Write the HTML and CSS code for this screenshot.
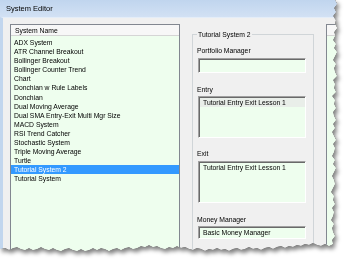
FILE: index.html
```html
<!DOCTYPE html>
<html lang="en">
  <head>
    <meta charset="UTF-8" />
    <meta name="viewport" content="width=device-width, initial-scale=1.0" />
    <title>System Editor</title>
    <link rel="stylesheet" href="styles.css">
  </head>
  <body>
    <div class="frame">
      <div class="window">
        <div class="titlebar">System Editor</div>
        <div class="client">
          <div class="listbox systems">
            <div class="list-header">System Name</div>
            <ul class="list-items">
              <li>ADX System</li>
              <li>ATR Channel Breakout</li>
              <li>Bollinger Breakout</li>
              <li>Bollinger Counter Trend</li>
              <li>Chart</li>
              <li>Donchian w Rule Labels</li>
              <li>Donchian</li>
              <li>Dual Moving Average</li>
              <li>Dual SMA Entry-Exit Multi Mgr Size</li>
              <li>MACD System</li>
              <li>RSI Trend Catcher</li>
              <li>Stochastic System</li>
              <li>Triple Moving Average</li>
              <li>Turtle</li>
              <li class="selected">Tutorial System 2</li>
              <li>Tutorial System</li>
            </ul>
          </div>

          <div class="group">
            <div class="group-title">Tutorial System 2</div>

            <div class="field-label first">Portfolio Manager</div>
            <div class="textbox single"></div>

            <div class="field-label">Entry</div>
            <div class="textbox multi">
              <div class="row inactive">Tutorial Entry Exit Lesson 1</div>
            </div>

            <div class="field-label exit">Exit</div>
            <div class="textbox multi exit-box">
              <div class="row">Tutorial Entry Exit Lesson 1</div>
            </div>

            <div class="field-label">Money Manager</div>
            <div class="textbox small">
              <div class="row">Basic Money Manager</div>
            </div>
          </div>

          <div class="listbox extra">
            <div class="list-header">&nbsp;</div>
          </div>
        </div>
      </div>
    </div>
  </body>
</html>
```

FILE: styles.css
```css
body {
  margin: 0;
  overflow: hidden;
  background: #ffffff;
  font-family: 'Liberation Sans', Arial, sans-serif;
  font-size: 6.8px;
  color: #000000;
}
.frame {
  width: 347px;
  height: 262px;
  filter: drop-shadow(0 0 0.6px rgba(0, 0, 0, 0.9)) drop-shadow(2px 3px 2px rgba(0, 0, 0, 0.5));
}
/* torn-edge screenshot effect */
.window {
  width: 340px;
  height: 254px;
  background: #f0f0f0;
  overflow: hidden;
  clip-path: polygon(
    0 0, 335px 0, 337px 4px, 334px 8px, 336px 12px, 333px 16px, 336px 20px,
    335px 24px, 337px 28px, 334px 32px, 335px 36px, 333px 40px, 336px 44px,
    334px 48px, 337px 52px, 335px 56px, 333px 60px, 336px 64px, 334px 68px,
    335px 72px, 337px 76px, 333px 80px, 335px 84px, 334px 88px, 336px 92px,
    332px 96px, 335px 100px, 334px 104px, 336px 108px, 333px 112px, 334px 116px,
    336px 120px, 333px 124px, 335px 128px, 332px 132px, 334px 136px, 336px 140px,
    333px 144px, 335px 148px, 334px 152px, 332px 156px, 335px 160px, 333px 164px,
    336px 168px, 334px 172px, 332px 176px, 334px 180px, 335px 184px, 333px 188px,
    331px 192px, 334px 196px, 333px 200px, 335px 204px, 332px 208px, 334px 212px,
    333px 216px, 331px 220px, 334px 224px, 332px 228px, 333px 232px, 335px 236px,
    332px 240px, 333px 244px,
    329px 246px, 325px 244px, 321px 246px, 317px 245px, 313px 243px, 309px 245px,
    305px 244px, 301px 246px, 297px 245px, 293px 247px, 289px 246px, 285px 248px,
    281px 246px, 277px 247px, 273px 249px, 269px 247px, 265px 248px, 261px 250px,
    257px 248px, 253px 249px, 249px 247px, 245px 249px, 241px 250px, 237px 248px,
    233px 249px, 229px 251px, 225px 249px, 221px 250px, 217px 248px, 213px 250px,
    209px 249px, 205px 251px, 201px 249px, 197px 248px, 193px 250px, 189px 249px,
    185px 247px, 181px 248px, 177px 246px, 173px 248px, 169px 247px, 165px 249px,
    161px 248px, 157px 246px, 153px 247px, 149px 245px, 145px 247px, 141px 246px,
    137px 248px, 133px 249px, 129px 247px, 125px 248px, 121px 250px, 117px 248px,
    113px 249px, 109px 251px, 105px 249px, 101px 248px, 97px 250px, 93px 248px,
    89px 250px, 85px 251px, 81px 249px, 77px 251px, 73px 250px, 69px 248px,
    65px 249px, 61px 251px, 57px 250px, 53px 248px, 49px 250px, 45px 249px,
    41px 247px, 37px 249px, 33px 250px, 29px 248px, 25px 250px, 21px 249px,
    17px 247px, 13px 248px, 9px 250px, 5px 248px, 0 249px
  );
}
.titlebar {
  height: 17px;
  line-height: 17px;
  padding-left: 6px;
  font-size: 7.5px;
  background: linear-gradient(#c0d5ee, #d2e1f4);
}
.client {
  display: flex;
  align-items: flex-start;
  height: 237px;
  padding: 6px 0 0 7px;
  border-left: 3px solid #c2d6ee;
  border-top: 1px solid #e4edf8;
  box-sizing: border-box;
}
.listbox {
  border: 1px solid #828790;
  background: #eefeee;
  height: 240px;
  box-sizing: border-box;
}
.systems {
  width: 170px;
  flex: none;
}
.list-header {
  height: 10px;
  line-height: 11px;
  padding-left: 4px;
  background: #f7f7f7;
  border-bottom: 1px solid #d5d5d5;
}
.list-items {
  list-style: none;
  margin: 0;
  padding: 2px 0 0 0;
}
.list-items li {
  height: 9.1px;
  line-height: 9.1px;
  padding-left: 3px;
}
.list-items li.selected {
  background: #3399ff;
  color: #ffffff;
}
.group {
  width: 122px;
  flex: none;
  margin: 10px 0 0 12px;
  height: 240px;
  padding: 0 7px 0 4px;
  border: 1px solid #d0d5d8;
  box-sizing: border-box;
}
.group-title {
  width: max-content;
  margin: -5px 0 0 0;
  padding: 0 1px;
  line-height: 9px;
  background: #f0f0f0;
}
.field-label {
  line-height: 9px;
  margin-top: 12px;
}
.field-label.first {
  margin-top: 7px;
}
.field-label.exit {
  margin-top: 11px;
}
.textbox {
  margin: 2px 0 0 1px;
  background: #eefeee;
  border-top: 1px solid #a0a0a0;
  border-left: 1px solid #a0a0a0;
  border-right: 1px solid #ffffff;
  border-bottom: 1px solid #ffffff;
  box-shadow: inset 1px 1px 0 #696969;
  box-sizing: border-box;
}
.textbox.single {
  height: 15px;
  margin-top: 3px;
}
.textbox.multi {
  height: 42px;
  padding: 1px 0 0 1px;
}
.exit-box {
  margin-top: 3px;
}
.textbox.small {
  height: 13px;
  padding: 1px 0 0 1px;
}
.row {
  line-height: 9px;
  padding-left: 3px;
}
.row.inactive {
  background: #e9eee9;
}
.extra {
  width: 40px;
  flex: none;
  margin-left: 12px;
}
```
